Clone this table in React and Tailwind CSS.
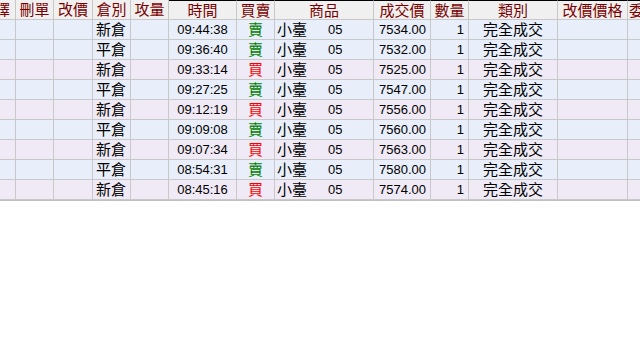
import React from "react";

const cols = [
  { key: "sel", title: "選擇", w: "w-[41px]" },
  { key: "del", title: "刪單", w: "w-[38px]" },
  { key: "chp", title: "改價", w: "w-[39px]" },
  { key: "type", title: "倉別", w: "w-[38px]" },
  { key: "chq", title: "攻量", w: "w-[38px]" },
  { key: "time", title: "時間", w: "w-[68px]", top: true },
  { key: "bs", title: "買賣", w: "w-[38px]", top: true },
  { key: "prod", title: "商品", w: "w-[99px]", top: true },
  { key: "price", title: "成交價", w: "w-[57px]", top: true },
  { key: "qty", title: "數量", w: "w-[38px]", top: true },
  { key: "kind", title: "類別", w: "w-[89px]", top: true },
  { key: "newp", title: "改價價格", w: "w-[70px]", top: true },
  { key: "ord", title: "委託書號", w: "w-[80px]", top: true, left: true },
];

const rows = [
  ["新倉", "09:44:38", "賣", "7534.00"],
  ["平倉", "09:36:40", "賣", "7532.00"],
  ["新倉", "09:33:14", "買", "7525.00"],
  ["平倉", "09:27:25", "賣", "7547.00"],
  ["新倉", "09:12:19", "買", "7556.00"],
  ["平倉", "09:09:08", "賣", "7560.00"],
  ["新倉", "09:07:34", "買", "7563.00"],
  ["平倉", "08:54:31", "賣", "7580.00"],
  ["新倉", "08:45:16", "買", "7574.00"],
];

const cell = "shrink-0 flex items-center border-r border-[#c8c8c8] h-full leading-none ";

export default function App() {
  return (
    <div className="w-[640px] h-[350px] bg-white overflow-hidden font-['Liberation_Sans','Noto_Sans_CJK_TC',sans-serif]">
      <div className="ml-[-25px] w-[700px]">
        <div className="flex h-[20px] bg-[#f0f0f0] border-b border-[#c8c8c8]">
          {cols.map((c) => (
            <div
              key={c.key}
              className={
                cell +
                c.w +
                " text-[15px] text-[#7a0000] " +
                (c.left ? "justify-start pl-[1px] " : "justify-center ") +
                (c.top ? "border-t border-t-black" : "")
              }
            >
              {c.title}
            </div>
          ))}
        </div>
        {rows.map((r, i) => {
          const sell = r[2] === "賣";
          const bg = sell ? "bg-[#e8eefa]" : "bg-[#f0eaf6]";
          return (
            <div key={i} className={"flex h-[20px] border-b border-[#c8c8c8] text-black " + bg}>
              <div className={cell + "w-[41px]"} />
              <div className={cell + "w-[38px]"} />
              <div className={cell + "w-[39px]"} />
              <div className={cell + "w-[38px] pl-[3px] text-[15px]"}>{r[0]}</div>
              <div className={cell + "w-[38px]"} />
              <div className={cell + "w-[68px] justify-center text-[13px]"}>{r[1]}</div>
              <div
                className={
                  cell + "w-[38px] justify-center text-[15px] " + (sell ? "text-[#008000]" : "text-[#ff0000]")
                }
              >
                {r[2]}
              </div>
              <div className={cell + "w-[99px] pl-[2px]"}>
                <span className="text-[15px]">小臺</span>
                <span className="ml-[21px] text-[13px]">05</span>
              </div>
              <div className={cell + "w-[57px] justify-end pr-[4px] text-[13px]"}>{r[3]}</div>
              <div className={cell + "w-[38px] justify-end pr-[4px] text-[13px]"}>1</div>
              <div className={cell + "w-[89px] justify-center text-[15px]"}>完全成交</div>
              <div className={cell + "w-[70px]"} />
              <div className={cell + "w-[80px]"} />
            </div>
          );
        })}
        <div className="h-[1px] bg-[#c0c0c0]" />
      </div>
    </div>
  );
}
